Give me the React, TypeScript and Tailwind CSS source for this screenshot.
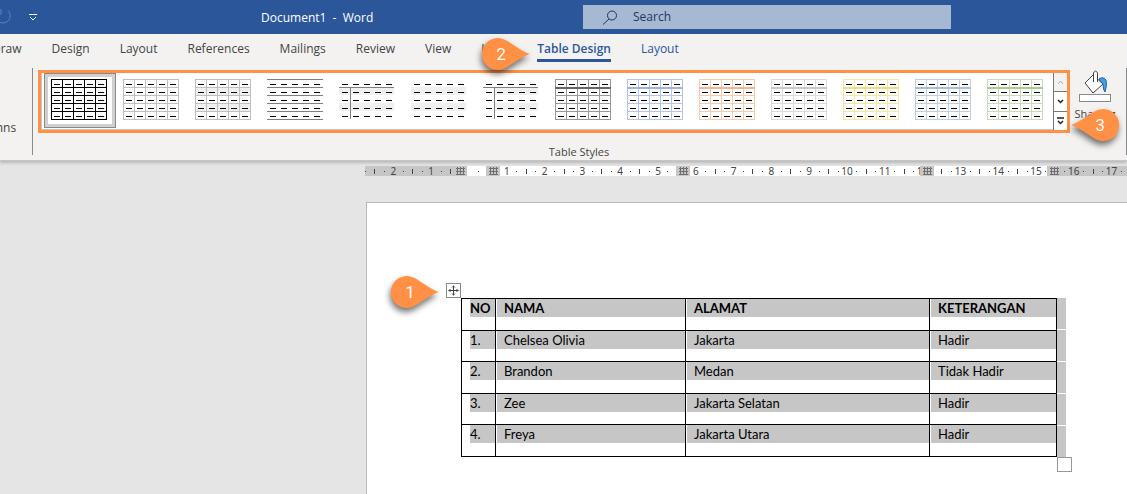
import React from 'react';

interface TableStyle {
    name: string;
    line?: string;
    header?: string;
    rows?: boolean;
    cols?: boolean;
    band?: boolean;
    firstColumn?: boolean;
    bandStart?: number;
}

const tableStyles: TableStyle[] = [
    { name: 'Table Grid', line: '#000000', rows: true, cols: true },
    { name: 'Table Grid Light', line: '#bfbfbf', rows: true, cols: true },
    { name: 'Plain Table 1', line: '#bfbfbf', rows: true, cols: true, band: true },
    { name: 'Plain Table 2', line: '#7f7f7f', rows: true },
    { name: 'Plain Table 3', line: '#7f7f7f', firstColumn: true, band: true },
    { name: 'Plain Table 4', band: true },
    { name: 'Plain Table 5', line: '#7f7f7f', firstColumn: true, band: true, bandStart: 12 },
    { name: 'Grid Table 1 Light', line: '#999999', header: '#666666', rows: true, cols: true },
    { name: 'Grid Table 1 Light Accent 1', line: '#b4c6e7', header: '#9fb4d8', rows: true, cols: true },
    { name: 'Grid Table 1 Light Accent 2', line: '#f7caac', header: '#efb595', rows: true, cols: true },
    { name: 'Grid Table 1 Light Accent 3', line: '#dbdbdb', header: '#c9c9c9', rows: true, cols: true },
    { name: 'Grid Table 1 Light Accent 4', line: '#f5e79b', header: '#f0dc7c', rows: true, cols: true },
    { name: 'Grid Table 1 Light Accent 5', line: '#bdd0e2', header: '#a3c0dc', rows: true, cols: true },
    { name: 'Grid Table 1 Light Accent 6', line: '#c8dcb9', header: '#a8cb92', rows: true, cols: true },
];

const tabs = ['Draw', 'Design', 'Layout', 'References', 'Mailings', 'Review', 'View', 'Help'];

const people = [
    { no: '1.', nama: 'Chelsea Olivia', alamat: 'Jakarta', keterangan: 'Hadir' },
    { no: '2.', nama: 'Brandon', alamat: 'Medan', keterangan: 'Tidak Hadir' },
    { no: '3.', nama: 'Zee', alamat: 'Jakarta Selatan', keterangan: 'Hadir' },
    { no: '4.', nama: 'Freya', alamat: 'Jakarta Utara', keterangan: 'Hadir' },
];

const steps = [0, 1, 2, 3, 4];
const lines = [0, 1, 2, 3, 4, 5];

const StyleThumb: React.FC<{ style: TableStyle }> = ({ style }) => (
    <svg width="56" height="41" shapeRendering="crispEdges" aria-hidden="true">
        {style.band && [1, 3].map(r => (
            <rect key={r} x={style.bandStart || 0} y={r * 8} width={55 - (style.bandStart || 0)} height="8" fill="#f0f0f0" />
        ))}
        {style.rows && lines.map(r => <rect key={r} x="0" y={r * 8} width="56" height="1" fill={style.line} />)}
        {style.cols && lines.map(c => <rect key={c} x={c * 11} y="0" width="1" height="41" fill={style.line} />)}
        {style.header && <rect x="0" y="8" width="56" height="2" fill={style.header} />}
        {style.firstColumn && (
            <>
                <rect x="0" y="8" width="55" height="1" fill={style.line} />
                <rect x="11" y="8" width="1" height="32" fill={style.line} />
            </>
        )}
        {steps.map(r => steps.map(c => (
            <rect key={`${r}-${c}`} x={c * 11 + 3} y={r * 8 + 5} width="6" height="1" fill="#000" />
        )))}
    </svg>
);

const Pin: React.FC<{ label: string; flip?: boolean }> = ({ label, flip }) => (
    <svg width="48" height="32" className="overflow-visible drop-shadow-[-1px_4px_3px_rgba(0,0,0,0.55)]">
        <path
            d="M48 16C40 13.500 32 7 24.500 2.500A16 16 0 1 0 24.500 29.500C32 25 40 18.500 48 16Z"
            fill="#ff9045"
            transform={flip ? 'translate(48 0) scale(-1 1)' : undefined}
        />
        <text x={flip ? 29 : 19} y="22" textAnchor="middle" fontSize="17" fill="#fff" fontFamily="Roboto, sans-serif">{label}</text>
    </svg>
);

// Ruler units are centimetres, zero sits on the left text margin
const UNIT = 37.8;
const ZERO = 104;

const RulerMark: React.FC<{ x: number }> = ({ x }) => (
    <g>
        <rect x={x - 7} y="0" width="14" height="10" fill="#c6c6c6" />
        {[-3, 0, 3].map(d => (
            <g key={d} fill="#6f6f6f">
                <rect x={x + d} y="1" width="1" height="8" />
                <rect x={x - 4} y={5 + d} width="9" height="1" />
            </g>
        ))}
    </g>
);

const Ruler: React.FC = () => {
    const units = Array.from({ length: 23 }, (_, i) => i - 2);
    return (
        <svg className="block h-[10px] w-full" aria-label="Horizontal ruler">
            <rect width="100%" height="10" fill="#c6c6c6" />
            <rect x="102" y="0" width="583" height="10" fill="#fff" />
            <g fill="#444">
                <rect x="0" y="5" width="1" height="1" />
                <rect x="9" y="3" width="1" height="5" />
                <rect x="19" y="5" width="1" height="1" />
            </g>
            {units.map(n => {
                const x = ZERO + n * UNIT;
                return (
                    <g key={n} fill="#444">
                        {n !== 0 && (
                            <text x={x} y="9" textAnchor="middle" fontSize="10" fontFamily="'Noto Sans', sans-serif">{Math.abs(n)}</text>
                        )}
                        <rect x={Math.round(x + UNIT / 4)} y="5" width="1" height="1" />
                        <rect x={Math.round(x + UNIT / 2)} y="3" width="1" height="5" />
                        <rect x={Math.round(x + (UNIT * 3) / 4)} y="5" width="1" height="1" />
                    </g>
                );
            })}
            <RulerMark x={95} />
            <rect x="120" y="0" width="18" height="10" fill="#fff" />
            <RulerMark x={128} />
            <RulerMark x={318} />
            <RulerMark x={562} />
            <RulerMark x={689} />
        </svg>
    );
};

const headClass = 'border border-black p-0 text-left align-top font-bold';
const cellClass = 'border border-black p-0 align-top';

const Cell: React.FC<{ children: React.ReactNode; first?: boolean }> = ({ children, first }) => (
    <div className={first ? 'ml-2 h-[18px] bg-[#c6c6c6]' : 'ml-px h-[18px] bg-[#c6c6c6] pl-[7px]'}>{children}</div>
);

const App: React.FC = () => {
    return (
        <div className="flex min-h-screen flex-col overflow-hidden bg-[#e5e5e5] font-['Open_Sans',sans-serif] text-[#444]">
            {/* Title bar */}
            <header className="grid h-[34px] grid-cols-[261px_322px_368px] items-center bg-[#2b579a] text-xs text-white">
                <div className="flex items-center gap-4">
                    <button type="button" aria-label="Redo">
                        <svg width="13" height="18" fill="none" stroke="#5f83bb">
                            <path d="M8 2.500A7 7 0 1 1 -2 13M1 1V6H-4" />
                        </svg>
                    </button>
                    <button type="button" aria-label="Customize Quick Access Toolbar">
                        <svg width="8" height="8" fill="none" stroke="#fff">
                            <path d="M0 1.500H8M1 4L4 7L7 4" />
                        </svg>
                    </button>
                </div>
                <span className="whitespace-pre pt-[2px]">Document1  -  Word</span>
                <label className="flex h-6 items-center gap-4 bg-[#a5b9d3] pl-5">
                    <svg width="14" height="15" fill="none" stroke="#1f3763">
                        <circle cx="9" cy="5.500" r="4.500" />
                        <path d="M6 9L0 14.500" />
                    </svg>
                    <input type="text" placeholder="Search" aria-label="Search" className="min-w-0 flex-1 bg-transparent outline-none placeholder:text-[#1f3763]" />
                </label>
            </header>

            {/* Ribbon */}
            <section className="border-b border-[#c6c6c6] bg-[#f3f2f1] shadow-[0_2px_3px_rgba(0,0,0,0.2)]">
                <nav className="-ml-2 flex h-[34px] gap-[30px] pt-[6px] text-xs leading-[18px]">
                    {tabs.map(tab => (
                        <button key={tab} type="button" className="h-[18px] whitespace-nowrap">{tab}</button>
                    ))}
                    <div className="relative h-[22px]">
                        <button type="button" className="h-[22px] whitespace-nowrap border-b-[3px] border-[#2b579a] pb-1 font-semibold text-[#2b579a]">Table Design</button>
                        <div className="absolute right-full top-[-2px] z-10 mr-[7px]">
                            <Pin label="2" />
                        </div>
                    </div>
                    <button type="button" className="h-[18px] text-[#2b579a]">Layout</button>
                </nav>
                <div className="flex h-[92px]">
                    <div className="flex h-[87px] w-[33px] shrink-0 items-center overflow-hidden border-r border-[#8a8a8a] pt-8 text-xs">
                        <span className="-ml-2">mns</span>
                    </div>
                    <div className="ml-[5px] flex min-w-0 flex-1 flex-col pt-[2px]">
                        <div className="flex h-[63px] border-[3px] border-[#ff9045] bg-white">
                            <div className="flex min-w-0 flex-1 overflow-hidden border-b border-l border-[#c6c6c6] pl-[2px]">
                                {tableStyles.map((style, i) => (
                                    <button
                                        key={style.name}
                                        type="button"
                                        aria-label={style.name}
                                        className={i === 0
                                            ? 'flex h-[55px] w-[72px] shrink-0 border border-[#8a8a8a] pl-[6px] pt-[5px] shadow-[inset_0_0_0_3px_#d0d0ce]'
                                            : 'flex h-[55px] w-[72px] shrink-0 border border-transparent pl-[6px] pt-[5px]'}
                                    >
                                        <StyleThumb style={style} />
                                    </button>
                                ))}
                            </div>
                            <div className="flex w-[14px] flex-col divide-y divide-[#777] border-l border-[#777]">
                                <button type="button" aria-label="Scroll up" className="flex flex-1 items-center justify-center bg-[#f3f2f1]">
                                    <svg width="7" height="5" fill="none" stroke="#b0b0b0"><path d="M1 4L3.500 1L6 4" /></svg>
                                </button>
                                <button type="button" aria-label="Scroll down" className="flex flex-1 items-center justify-center">
                                    <svg width="7" height="5" fill="none" stroke="#222" strokeWidth="1.500"><path d="M1 1L3.500 3.500L6 1" /></svg>
                                </button>
                                <button type="button" aria-label="More styles" className="flex flex-1 items-center justify-center">
                                    <svg width="7" height="8" fill="none" stroke="#222" strokeWidth="1.500"><path d="M0 1H7M1 4L3.500 6.500L6 4" /></svg>
                                </button>
                            </div>
                        </div>
                        <span className="pl-[50px] pt-[11px] text-center text-[11px] leading-4">Table Styles</span>
                    </div>
                    <div className="relative flex h-[87px] w-[57px] shrink-0 justify-center border-r border-[#8a8a8a]">
                        <button type="button" className="flex flex-col items-center pr-[6px] pt-[2px] text-[11px] leading-6">
                            <svg width="32" height="32" fill="none">
                                <path d="M6 13L14 5L24 14L14 23Z" fill="#fff" stroke="#444" />
                                <path d="M14.500 12V3Q16.500 -1 18.500 3V12" fill="#fff" stroke="#444" />
                                <path d="M20 9Q24 6 27 10Q28.500 15 26 22Q24 20 24 14Z" fill="#4a9bdc" stroke="#1b68b3" />
                                <rect x="0.500" y="24.500" width="31" height="7" fill="#fff" stroke="#8a8a8a" />
                            </svg>
                            <span>Shading</span>
                        </button>
                        <div className="absolute left-[1px] top-[41px] z-10">
                            <Pin label="3" flip />
                        </div>
                    </div>
                </div>
            </section>

            {/* Document area */}
            <main className="flex flex-1 flex-col pl-[365px] pt-[5px]">
                <Ruler />
                <div className="ml-px mt-[26px] flex-1 border-l border-t border-[#bbb] bg-white pl-[94px] pt-[95px]">
                    <div className="relative w-[596px]">
                        <table className="w-full table-fixed border-collapse font-['Lato',sans-serif] text-[13px] leading-[18px] text-black">
                            <colgroup>
                                <col className="w-[34px]" />
                                <col className="w-[190px]" />
                                <col className="w-[244px]" />
                                <col />
                            </colgroup>
                            <thead>
                                <tr className="h-8">
                                    <th className={headClass}><Cell first>NO</Cell></th>
                                    <th className={headClass}><Cell>NAMA</Cell></th>
                                    <th className={headClass}><Cell>ALAMAT</Cell></th>
                                    <th className={headClass}><Cell>KETERANGAN</Cell></th>
                                </tr>
                            </thead>
                            <tbody>
                                {people.map(person => (
                                    <tr key={person.no} className="odd:h-[31px] even:h-8">
                                        <td className={cellClass}><Cell first>{person.no}</Cell></td>
                                        <td className={cellClass}><Cell>{person.nama}</Cell></td>
                                        <td className={cellClass}><Cell>{person.alamat}</Cell></td>
                                        <td className={cellClass}><Cell>{person.keterangan}</Cell></td>
                                    </tr>
                                ))}
                            </tbody>
                        </table>

                        {/* Row end marks, highlighted with the selection */}
                        <div className="absolute inset-y-0 left-full flex w-[9px] flex-col gap-px">
                            {steps.map(row => <div key={row} className="flex-1 bg-[#c6c6c6]" />)}
                        </div>
                        <div className="absolute left-full top-full size-[15px] border border-[#999] bg-white" />
                        <button type="button" aria-label="Move table" className="absolute bottom-full right-full flex size-[15px] items-center justify-center border border-[#888] bg-white">
                            <svg width="11" height="11" fill="none" stroke="#444" className="shrink-0">
                                <path d="M5.500 0.500V10.500M0.500 5.500H10.500M4 2.500L5.500 1L7 2.500M4 8.500L5.500 10L7 8.500M2.500 4L1 5.500L2.500 7M8.500 4L10 5.500L8.500 7" />
                            </svg>
                        </button>
                        <div className="absolute -top-[22px] right-full mr-[22px]">
                            <Pin label="1" />
                        </div>
                    </div>
                </div>
            </main>
        </div>
    );
};

export default App;
